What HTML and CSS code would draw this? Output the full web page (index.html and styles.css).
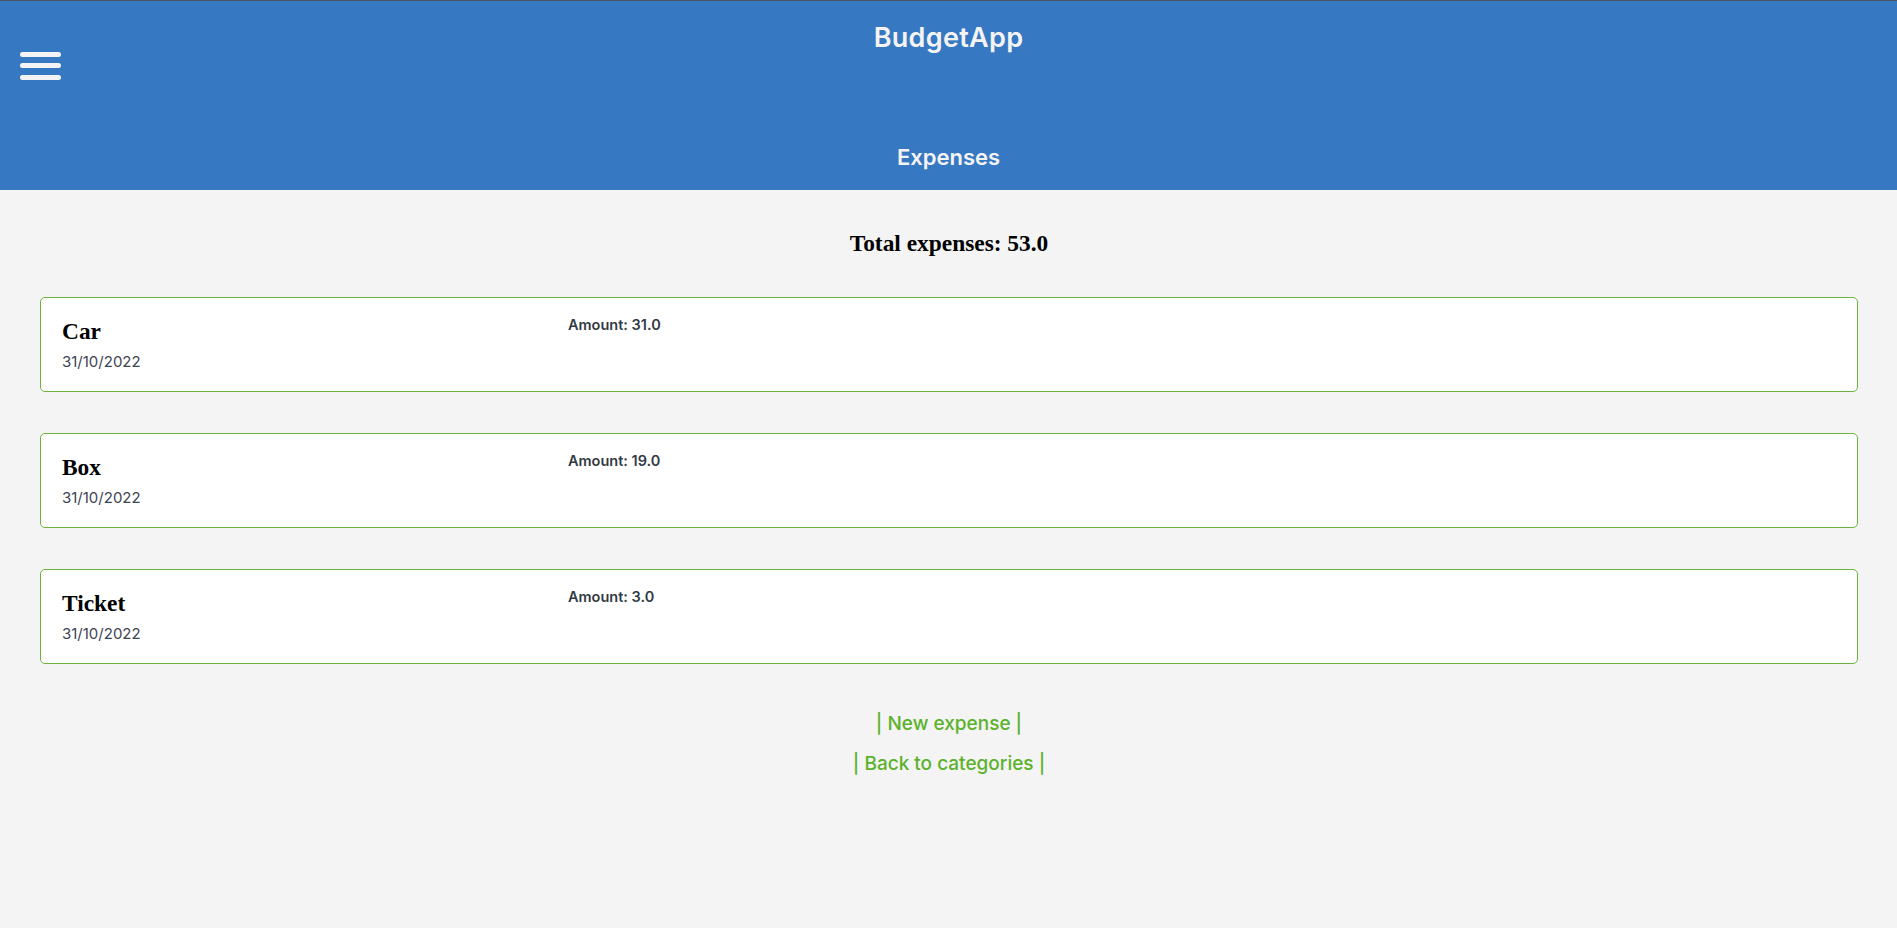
FILE: index.html
```html
<!DOCTYPE html>
<html lang="en">
<head>
<meta charset="utf-8">
<title>BudgetApp</title>
<link rel="stylesheet" href="styles.css">
</head>
<body>
<header class="topbar">
  <div class="topbar-row">
    <button class="menu-btn" aria-label="Menu">
      <span class="bar"></span><span class="bar"></span><span class="bar"></span>
    </button>
    <h1 class="brand">BudgetApp</h1>
    <div class="spacer"></div>
  </div>
  <h2 class="page-title">Expenses</h2>
</header>
<main class="content">
  <h3 class="total">Total expenses: 53.0</h3>
  <div class="list">
    <div class="card">
      <div class="card-left">
        <h3 class="item-name">Car</h3>
        <p class="item-date">31/10/2022</p>
      </div>
      <p class="item-amount">Amount: 31.0</p>
    </div>
    <div class="card">
      <div class="card-left">
        <h3 class="item-name">Box</h3>
        <p class="item-date">31/10/2022</p>
      </div>
      <p class="item-amount">Amount: 19.0</p>
    </div>
    <div class="card">
      <div class="card-left">
        <h3 class="item-name">Ticket</h3>
        <p class="item-date">31/10/2022</p>
      </div>
      <p class="item-amount">Amount: 3.0</p>
    </div>
  </div>
  <nav class="links">
    <a class="link" href="#">| New expense |</a>
    <a class="link" href="#">| Back to categories |</a>
  </nav>
</main>
</body>
</html>
```
FILE: styles.css
```css
* { box-sizing: border-box; }
html, body { margin: 0; padding: 0; }
body {
  background: #f4f4f4;
  font-family: Inter, "Open Sans", sans-serif;
  height: 928px;
}
.topbar {
  background: #3778c2;
  border-top: 1px solid #4d5560;
  height: 190px;
  color: #f4f4f4;
  padding-top: 21px;
}
.topbar-row {
  display: grid;
  grid-template-columns: 1fr auto 1fr;
  align-items: start;
}
.menu-btn {
  justify-self: start;
  margin: 30px 0 0 20px;
  padding: 0;
  border: 0;
  background: none;
  width: 41px;
  display: flex;
  flex-direction: column;
  gap: 6px;
}
.bar {
  display: block;
  height: 5px;
  width: 41px;
  background: #f4f4f4;
  border-radius: 3px;
}
.bar:last-child { margin-top: 1px; }
.brand {
  margin: 0;
  font-size: 27px;
  font-weight: 600;
  line-height: 32px;
  letter-spacing: 0.3px;
}
.page-title {
  margin: 63px 0 0;
  text-align: center;
  font-size: 22px;
  font-weight: 600;
  line-height: 28px;
}
.content {
  padding: 0 39px 0 40px;
}
.total {
  margin: 40px 0 0;
  text-align: center;
  font-family: "Liberation Serif", "Times New Roman", serif;
  font-weight: 700;
  font-size: 23.4px;
  line-height: 27px;
  color: #000;
}
.list {
  margin-top: 40px;
  display: flex;
  flex-direction: column;
  gap: 41px;
}
.card {
  height: 95px;
  background: #fff;
  border: 1px solid #6cb23f;
  border-radius: 5px;
  padding: 18px 21px 0;
  display: grid;
  grid-template-columns: 506px 1fr;
  align-items: start;
}
.item-name {
  margin: 2px 0 0;
  font-family: "Liberation Serif", "Times New Roman", serif;
  font-weight: 700;
  font-size: 23.4px;
  line-height: 27px;
  color: #000;
}
.item-date {
  margin: 7px 0 0;
  font-size: 15px;
  line-height: 20px;
  color: #3d4452;
}
.item-amount {
  margin: 0;
  font-size: 14.5px;
  font-weight: 600;
  line-height: 18px;
  color: #333a45;
}
.links {
  margin-top: 40px;
  display: flex;
  flex-direction: column;
  align-items: center;
}
.link {
  font-size: 19px;
  font-weight: 500;
  line-height: 40px;
  color: #5cb22b;
  text-decoration: none;
}
```
